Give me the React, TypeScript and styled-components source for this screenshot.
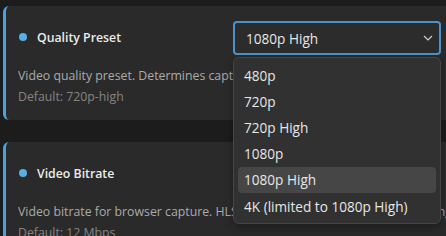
import React from "react";
import styled, { createGlobalStyle } from "styled-components";

const Global = createGlobalStyle`
  html, body { margin: 0; padding: 0; background: #1c1c1c; overflow: hidden; }
  body { font-family: "Open Sans", "Noto Sans", sans-serif; }
  * { box-sizing: border-box; }
`;

const Page = styled.div`
  width: 446px;
  height: 236px;
  padding: 6px 0 0 3px;
  display: flex;
  flex-direction: column;
  gap: 22px;
  overflow: hidden;
`;

const Card = styled.div`
  position: relative;
  background: #2a2a2a;
  border-left: 3px solid #4aa3df;
  border-radius: 6px 0 0 6px;
  height: 114px;
  flex-shrink: 0;
  padding: 14px 0 0 12px;
`;

const Header = styled.div`
  display: flex;
  align-items: center;
  height: 34px;
`;

const Dot = styled.span`
  width: 8px;
  height: 8px;
  border-radius: 50%;
  background: #5aaee6;
  margin: 0 10px 0 1px;
`;

const Title = styled.span`
  font-size: 12.3px;
  font-weight: 600;
  color: #ececec;
`;

const Desc = styled.div`
  margin-top: 13px;
  font-size: 12.3px;
  color: #ababab;
  white-space: nowrap;
  overflow: hidden;
`;

const Default = styled.div`
  margin-top: 4px;
  font-size: 12.3px;
  color: #858585;
  white-space: nowrap;
`;

const SelectBox = styled.div`
  position: absolute;
  left: 227px;
  top: 15px;
  width: 208px;
  height: 34px;
  border: 2px solid #4a92cc;
  border-radius: 4px;
  background: #2c2c2c;
  display: flex;
  align-items: center;
  justify-content: space-between;
  padding: 0 6px 0 11px;
  font-size: 13.6px;
  color: #e6e6e6;
`;

const Menu = styled.div`
  position: absolute;
  left: 227px;
  top: 51px;
  width: 208px;
  background: #313131;
  border: 1px solid #454545;
  border-radius: 6px;
  padding: 4px;
  display: flex;
  flex-direction: column;
  z-index: 5;
  box-shadow: 0 4px 10px rgba(0,0,0,0.3);
`;

const Item = styled.div<{ $active?: boolean }>`
  height: 26.2px;
  display: flex;
  align-items: center;
  padding-left: 6px;
  border-radius: 4px;
  font-size: 13.6px;
  color: #e6e6e6;
  background: ${(p) => (p.$active ? "#464646" : "transparent")};
`;

const options = ["480p", "720p", "720p High", "1080p", "1080p High", "4K (limited to 1080p High)"];

export default function App() {
  return (
    <>
      <Global />
      <Page>
        <Card>
          <Header>
            <Dot />
            <Title>Quality Preset</Title>
          </Header>
          <Desc>Video quality preset. Determines capture resolution and encoding profile</Desc>
          <Default>Default: 720p-high</Default>
          <SelectBox>
            <span>1080p High</span>
            <svg width="10" height="6" viewBox="0 0 10 6" fill="none">
              <path d="M1 1l4 4 4-4" stroke="#cfcfcf" strokeWidth="1.2" />
            </svg>
          </SelectBox>
          <Menu>
            {options.map((o) => (
              <Item key={o} $active={o === "1080p High"}>{o}</Item>
            ))}
          </Menu>
        </Card>
        <Card>
          <Header>
            <Dot />
            <Title>Video Bitrate</Title>
          </Header>
          <Desc>Video bitrate for browser capture. HLS streams use their own bitrate setting</Desc>
          <Default>Default: 12 Mbps</Default>
        </Card>
      </Page>
    </>
  );
}
